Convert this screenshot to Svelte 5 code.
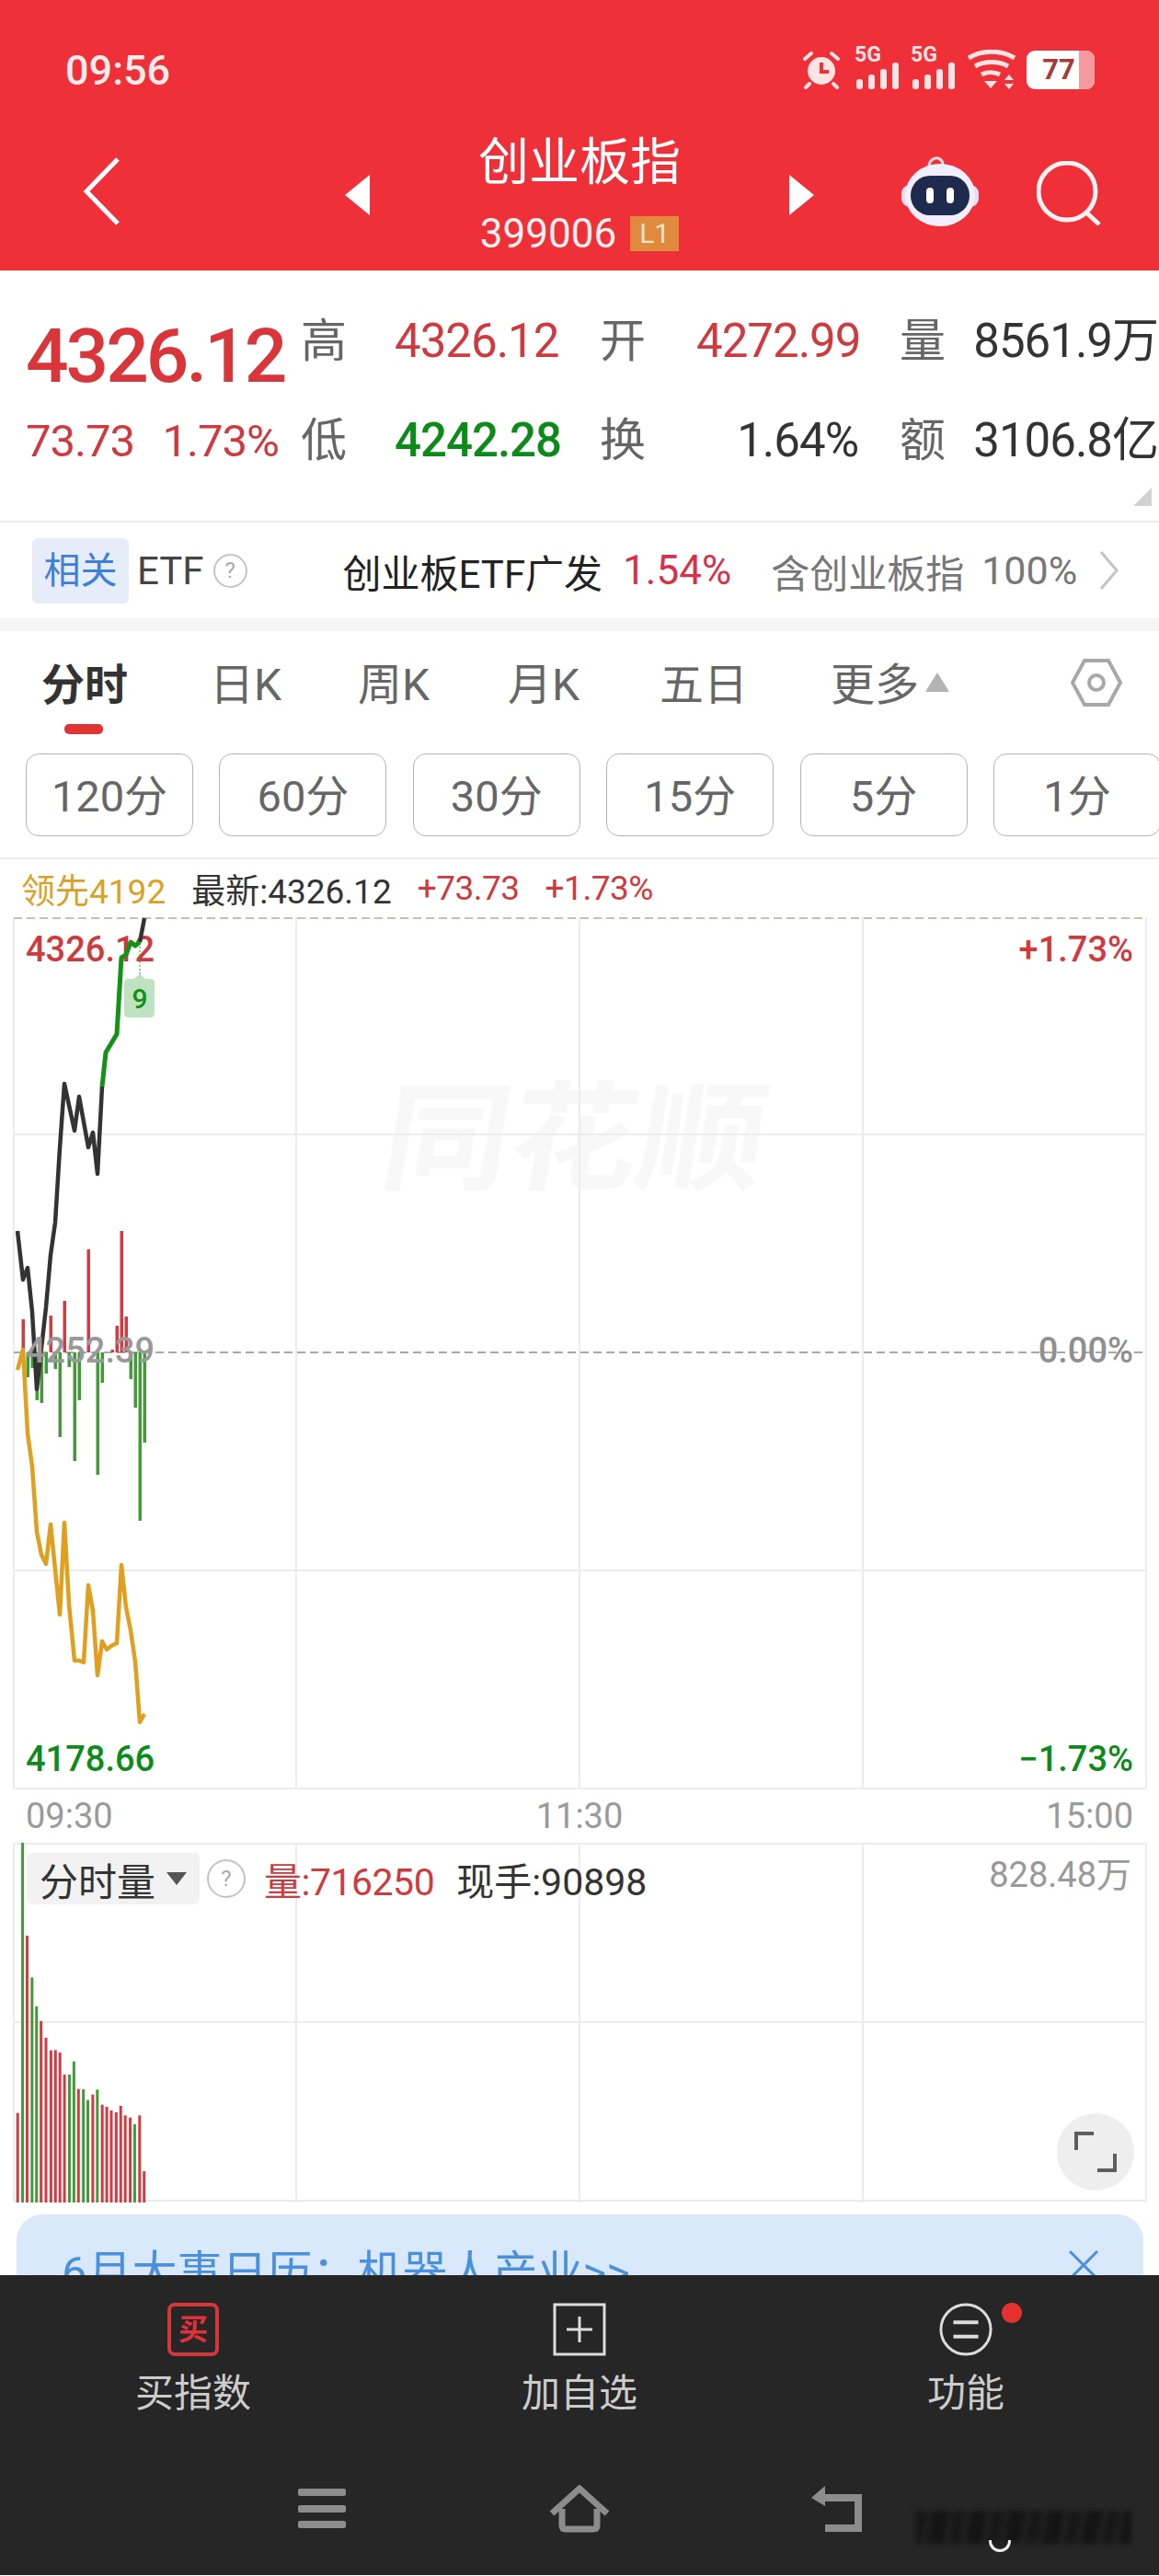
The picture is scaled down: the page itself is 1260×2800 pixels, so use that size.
<script>
	const stats = [
		{ label: '高', value: '4326.12', tone: 'up', pad: false },
		{ label: '开', value: '4272.99', tone: 'up', pad: true },
		{ label: '量', value: '8561.9万', tone: 'ink', pad: true }
	];
	const stats2 = [
		{ label: '低', value: '4242.28', tone: 'down', pad: false },
		{ label: '换', value: '1.64%', tone: 'ink', pad: true },
		{ label: '额', value: '3106.8亿', tone: 'ink', pad: true }
	];
	const tabs = ['分时', '日K', '周K', '月K', '五日'];
	const periods = ['120分', '60分', '30分', '15分', '5分', '1分'];

	const pts = (list) => list.map((p) => p.join(',')).join(' ');

	const blackA = [[19,1337],[25,1390],[30,1377],[35,1425],[40,1509],[50,1420],[55,1363],[60,1328],[65,1247],[70,1177],[81,1228],[86,1191],[96,1246],[101,1230],[106,1275],[111,1180]];
	const greenA = [[111,1180],[115,1143],[127,1123],[132,1040],[137,1037],[142,1023],[147,1027],[152,1023]];
	const blackB = [[152,1023],[157,997]];
	const yellow = [[19,1488],[25,1466],[30,1557],[35,1593],[40,1664],[45,1689],[50,1699],[55,1656],[65,1754],[70,1654],[75,1743],[81,1804],[86,1804],[91,1806],[96,1722],[101,1750],[106,1820],[111,1783],[116,1792],[121,1788],[127,1785],[132,1700],[137,1746],[142,1771],[147,1805],[152,1871],[157,1862]];

	const upBars = [[25,1433],[55,1429],[70,1413],[96,1357],[122,1466],[127,1440],[132,1337],[137,1430]];
	const downBars = [[30,1496],[35,1486],[40,1521],[45,1524],[50,1492],[60,1487],[65,1561],[75,1485],[81,1587],[86,1521],[106,1602],[111,1502],[142,1498],[147,1529],[152,1652],[157,1567]];

	const volume = [[43,1010,'r'],[55,128,'g'],[66,432,'r'],[78,568,'g'],[89,662,'g'],[100,710,'r'],[112,765,'r'],[124,806,'r'],[135,805,'r'],[146,813,'r'],[157,885,'r'],[169,885,'g'],[180,842,'g'],[191,932,'r'],[203,933,'g'],[214,968,'g'],[226,950,'r'],[237,934,'g'],[249,983,'r'],[260,990,'r'],[271,1002,'r'],[283,1008,'r'],[294,987,'r'],[305,1018,'r'],[317,1025,'r'],[328,1047,'g'],[340,1018,'r'],[351,1200,'r']].map(([z, t, c]) => ({ x: z / 2.24, top: 1960 + t / 3, c }));
</script>

<div class="page">
	<header class="head">
		<div class="status">
			<span class="time">09:56</span>
			<div class="sysicons">
				<svg class="alarm" width="42" height="42" viewBox="0 0 42 42" fill="none">
					<circle cx="21" cy="22" r="15" fill="#fde3e4" />
					<path d="M21 13v10h8" stroke="#ee3039" stroke-width="4" />
					<path d="M3 9l7-6M39 9l-7-6M8 36l-4 4M34 36l4 4" stroke="#fde3e4" stroke-width="4" stroke-linecap="round" />
				</svg>
				<div class="signal">
					<span class="g">5G</span>
					<svg width="48" height="30" viewBox="0 0 48 30" fill="#fde3e4">
						<rect x="2" y="18" width="7" height="11" rx="3" /><rect x="15" y="13" width="7" height="16" rx="3" /><rect x="28" y="7" width="7" height="22" rx="3" /><rect x="41" y="0" width="7" height="29" rx="3" />
					</svg>
				</div>
				<div class="signal">
					<span class="g">5G</span>
					<svg width="48" height="30" viewBox="0 0 48 30" fill="#fde3e4">
						<rect x="2" y="18" width="7" height="11" rx="3" /><rect x="15" y="13" width="7" height="16" rx="3" /><rect x="28" y="7" width="7" height="22" rx="3" /><rect x="41" y="0" width="7" height="29" rx="3" />
					</svg>
				</div>
				<svg width="54" height="44" viewBox="0 0 54 44" fill="none" stroke="#fde3e4" stroke-width="5">
					<path d="M2 9c15-9 35-9 50 0" />
					<path d="M9 18c10-6 26-6 36 0" />
					<path d="M16 27c6-3 14-3 20 0" />
					<path d="M19 34h14l-7 8z" fill="#fde3e4" stroke="none" />
					<path d="M46 27l5 6h-10zM46 43l5-6h-10z" fill="#fde3e4" stroke="none" />
				</svg>
				<div class="batt"><span class="lvl">77</span><i></i></div>
			</div>
		</div>
		<div class="nav">
			<svg class="back" width="44" height="78" viewBox="0 0 44 78" fill="none">
				<path d="M40 4L6 39l34 35" stroke="#fff" stroke-width="5" />
			</svg>
			<svg class="lift" width="27" height="44" viewBox="0 0 27 44"><path d="M27 0v44L0 22z" fill="#fff" /></svg>
			<div class="title">
				<div class="name">创业板指</div>
				<div class="code">399006 <span class="lv">L1</span></div>
			</div>
			<svg class="lift" width="27" height="44" viewBox="0 0 27 44"><path d="M0 0v44l27-22z" fill="#fff" /></svg>
			<svg class="lift bot" width="84" height="78" viewBox="0 0 84 78">
				<path d="M30 12c0-8 8-11 12-8s3 6 3 9" fill="none" stroke="#f3dbe4" stroke-width="3" />
				<rect x="0" y="32" width="84" height="24" rx="9" fill="#e5dcf5" />
				<ellipse cx="42" cy="43" rx="38" ry="34" fill="#f2eefb" />
				<rect x="10" y="22" width="64" height="43" rx="21" fill="#1e2b4f" />
				<rect x="27" y="35" width="8" height="17" rx="4" fill="#fff" />
				<rect x="49" y="35" width="8" height="17" rx="4" fill="#fff" />
			</svg>
			<svg class="lift search" width="70" height="70" viewBox="0 0 70 70" fill="none" stroke="#fef1f1" stroke-width="5">
				<circle cx="33" cy="33" r="31" />
				<path d="M53 55l15 14" />
			</svg>
		</div>
	</header>

	<section class="quote">
		<div class="big">4326.12</div>
		{#each stats as s}
			<div class="lab" class:pad={s.pad}>{s.label}</div>
			<div class="val {s.tone}">{s.value}</div>
		{/each}
		<div class="chg"><span>73.73</span><span>1.73%</span></div>
		{#each stats2 as s}
			<div class="lab" class:pad={s.pad}>{s.label}</div>
			<div class="val {s.tone}">{s.value}</div>
		{/each}
		<svg class="corner" width="20" height="20" viewBox="0 0 20 20"><path d="M20 0v20H0z" fill="#d2d2d2" /></svg>
	</section>

	<section class="etf">
		<span class="tag">相关</span>
		<span class="etfname">ETF</span>
		<span class="qm">?</span>
		<span class="fund">创业板ETF广发</span>
		<span class="pct">1.54%</span>
		<span class="hold">含创业板指</span>
		<span class="hold full">100%</span>
		<svg class="more" width="22" height="44" viewBox="0 0 22 44" fill="none"><path d="M2 2l17 20L2 42" stroke="#c4c4c4" stroke-width="3" /></svg>
	</section>
	<div class="strip"></div>

	<nav class="tabs">
		{#each tabs as t, i}
			<div class="tab" class:on={i === 0}>{t}{#if i === 0}<i class="bar"></i>{/if}</div>
		{/each}
		<div class="tab more-tab">更多<svg class="upt" width="26" height="21" viewBox="0 0 26 21"><path d="M13 0l13 21H0z" fill="#b3b3b3" /></svg></div>
		<svg class="hex" width="56" height="54" viewBox="0 0 56 54" fill="none" stroke="#a8a8a8" stroke-width="4">
			<path d="M15 3h26l13 24-13 24H15L2 27z" />
			<circle cx="28" cy="27" r="8" />
		</svg>
	</nav>

	<div class="periods">
		{#each periods as p}
			<div class="period">{p}</div>
		{/each}
	</div>

	<div class="legend">
		<span class="lead">领先4192</span>
		<span class="last">最新:4326.12</span>
		<span class="rise">+73.73</span>
		<span class="rise">+1.73%</span>
	</div>

	<div class="chart">
		<svg width="1260" height="948" viewBox="0 996 1260 948">
			<text class="mark" x="821" y="1282" text-anchor="middle" transform="skewX(-9)" textLength="416" lengthAdjust="spacingAndGlyphs">同花顺</text>
			{#each [15, 322, 630, 938, 1246] as x}
				<line x1={x} x2={x} y1="996" y2="1944" class="grid" />
			{/each}
			{#each [1232, 1706, 1943] as y}
				<line x1="15" x2="1246" y1={y} y2={y} class="grid" />
			{/each}
			<line x1="15" x2="1246" y1="997" y2="997" class="top" />
			<line x1="15" x2="1246" y1="1469" y2="1469" class="mid" />

			{#each upBars as b}
				<rect x={b[0] - 1.5} y={b[1]} width="3.5" height={1469 - b[1]} fill="#cf3c41" />
			{/each}
			{#each downBars as b}
				<rect x={b[0] - 1.5} y="1469" width="3.5" height={b[1] - 1469} fill="#449a3b" />
			{/each}

			<text class="lbl" x="28" y="1044" fill="#cf3a3f">4326.12</text>
			<text class="lbl" x="1232" y="1044" fill="#cf3a3f" text-anchor="end">+1.73%</text>
			<text class="lbl" x="28" y="1924" fill="#0c8a1a">4178.66</text>
			<text class="lbl" x="1232" y="1924" fill="#0c8a1a" text-anchor="end">−1.73%</text>

			<polyline points={pts(yellow)} class="ln" stroke="#e09f1f" />
			<polyline points={pts(blackA)} class="ln" stroke="#333" />
			<polyline points={pts(blackB)} class="ln" stroke="#333" />
			<polyline points={pts(greenA)} class="ln thick" stroke="#149117" />

			<line x1="152" x2="152" y1="1024" y2="1058" stroke="#2f8f3a" stroke-width="1" stroke-dasharray="2 2" />
			<path d="M152 1058l6 5h5q5 0 5 5v32q0 5-5 5h-23q-5 0-5-5v-32q0-5 5-5h5z" fill="#bfe3c0" />
			<text x="152" y="1095" class="nine" text-anchor="middle">9</text>

			<text class="lbl" x="28" y="1480" fill="#999">4252.39</text>
			<text class="lbl" x="1232" y="1480" fill="#8f8f8f" text-anchor="end">0.00%</text>
		</svg>
	</div>

	<div class="axis"><span>09:30</span><span>11:30</span><span>15:00</span></div>

	<div class="vol">
		<svg width="1260" height="391" viewBox="0 2003 1260 391">
			{#each [15, 322, 630, 938, 1246] as x}
				<line x1={x} x2={x} y1="2003" y2="2394" class="grid" />
			{/each}
			{#each [2004, 2198, 2392] as y}
				<line x1="15" x2="1246" y1={y} y2={y} class="grid" />
			{/each}
			{#each volume as v}
				<rect x={v.x - 1.5} y={v.top} width="3" height={2394 - v.top} fill={v.c === 'r' ? '#cf3c41' : '#449a3b'} />
			{/each}
		</svg>
		<div class="volbar">
			<div class="chip">分时量<svg width="22" height="14" viewBox="0 0 22 14"><path d="M0 0h22L11 14z" fill="#555" /></svg></div>
			<span class="qm wide">?</span>
			<span class="rise v">量:716250</span>
			<span class="now">现手:90898</span>
		</div>
		<div class="vmax">828.48万</div>
		<div class="expand">
			<svg width="46" height="46" viewBox="0 0 46 46" fill="none" stroke="#5e5e5e" stroke-width="4">
				<path d="M2 21V3h19M44 25v18H25" />
			</svg>
		</div>
	</div>

	<div class="banner">
		<span class="bt">6月大事日历：机器人产业&gt;&gt;</span>
		<svg width="34" height="34" viewBox="0 0 34 34" fill="none" stroke="#4a90dc" stroke-width="3"><path d="M2 2l30 30M32 2L2 32" /></svg>
	</div>

	<footer class="foot">
		<div class="actions">
			<div class="act">
				<div class="ico buy">买</div>
				<span>买指数</span>
			</div>
			<div class="act">
				<svg class="ico" width="58" height="58" viewBox="0 0 58 58" fill="none" stroke="#ddd" stroke-width="3">
					<rect x="2" y="2" width="54" height="54" />
					<path d="M29 15v28M15 29h28" />
				</svg>
				<span>加自选</span>
			</div>
			<div class="act fn">
				<svg class="ico" width="60" height="60" viewBox="0 0 60 60" fill="none" stroke="#ddd" stroke-width="3">
					<circle cx="30" cy="30" r="28" />
					<path d="M16 22h28M16 38h28" stroke-width="4" />
				</svg>
				<i class="dot"></i>
				<span>功能</span>
			</div>
		</div>
		<div class="sysnav">
			<svg width="54" height="44" viewBox="0 0 54 44" fill="#8c8c8c">
				<rect x="1" y="0" width="52" height="8" rx="2" /><rect x="1" y="18" width="52" height="8" rx="2" /><rect x="1" y="35" width="52" height="8" rx="2" />
			</svg>
			<svg width="68" height="52" viewBox="0 0 68 52" fill="none" stroke="#8c8c8c" stroke-width="7">
				<path d="M4 31L34 4l30 27" />
				<path d="M15 26v18q0 4 4 4h30q4 0 4-4V26" />
			</svg>
			<svg width="58" height="52" viewBox="0 0 58 52" fill="none">
				<path d="M14 14h38v33H16" stroke="#8c8c8c" stroke-width="8" />
				<path d="M1 14L16 1v22z" fill="#8c8c8c" />
			</svg>
		</div>
		<div class="smudge"></div>
		<i class="g"></i>
	</footer>
</div>

<style>
	:global(body) {
		margin: 0;
		background: #fff;
	}
	.page {
		width: 1260px;
		height: 2800px;
		overflow: hidden;
		font-family: Roboto, 'Noto Sans CJK SC', sans-serif;
		color: #333;
		background: #fff;
	}
	.head {
		height: 294px;
		background: #ef3038;
		color: #fff;
		box-sizing: border-box;
		padding-top: 51px;
	}
	.status {
		display: flex;
		justify-content: space-between;
		align-items: center;
		height: 50px;
		padding: 0 70px 0 71px;
	}
	.time {
		font-size: 45px;
		font-weight: 500;
		color: #fdeaea;
	}
	.sysicons {
		display: flex;
		align-items: center;
		gap: 11px;
	}
	.alarm {
		margin-right: 4px;
	}
	.signal {
		position: relative;
		width: 50px;
		height: 44px;
		display: flex;
		align-items: flex-end;
	}
	.signal .g {
		position: absolute;
		left: 0;
		top: -6px;
		font-size: 23px;
		line-height: 24px;
		font-weight: 700;
		color: #fde3e4;
	}
	.batt {
		position: relative;
		width: 74px;
		height: 42px;
		box-sizing: border-box;
		background: #fff;
		border-radius: 9px;
		text-align: center;
		overflow: hidden;
	}
	.batt i {
		position: absolute;
		right: 0;
		top: 0;
		width: 17px;
		height: 42px;
		background: #f79aa0;
	}
	.lvl {
		display: block;
		padding-right: 4px;
		font-size: 31px;
		line-height: 42px;
		font-weight: 700;
		color: #a93a3a;
	}
	.nav {
		display: grid;
		grid-template-columns: 375px 27px 456px 27px 95px 84px 63px 70px;
		margin-top: 40px;
		align-items: center;
	}
	.back {
		margin-left: 88px;
		margin-bottom: 14px;
	}
	.lift {
		margin-bottom: 6px;
	}
	.bot {
		grid-column: 6;
		margin-bottom: 14px;
	}
	.search {
		grid-column: 8;
		margin-bottom: 10px;
	}
	.name {
		font-size: 55px;
		line-height: 70px;
		color: #fff;
	}
	.title {
		text-align: center;
	}
	.code {
		margin-top: 8px;
		height: 70px;
		display: flex;
		justify-content: center;
		align-items: center;
		gap: 15px;
		font-size: 44px;
		color: #fdf0f0;
	}
	.lv {
		width: 53px;
		height: 38px;
		background: #e08a3e;
		color: #fbe3c9;
		font-size: 30px;
		line-height: 38px;
		text-align: center;
	}
	.quote {
		position: relative;
		height: 274px;
		box-sizing: border-box;
		padding: 23px 0 0 28px;
		display: grid;
		grid-template-columns: 299px 102px 178px 150px 176px 124px 202px;
		grid-template-rows: 108px 108px;
		align-items: center;
		border-bottom: 2px solid #ececec;
	}
	.big {
		font-size: 82px;
		font-weight: 500;
		color: #d8363a;
		letter-spacing: -3px;
		padding-top: 32px;
		line-height: 76px;
		white-space: nowrap;
	}
	.lab {
		font-size: 50px;
		line-height: 60px;
		color: #666;
	}
	.lab.pad {
		padding-left: 45px;
	}
	.val {
		font-size: 51px;
		line-height: 60px;
		letter-spacing: -1px;
		text-align: right;
		white-space: nowrap;
	}
	.up {
		color: #cf3a3f;
	}
	.down {
		color: #0c8a1a;
		font-weight: 500;
	}
	.ink {
		color: #333;
	}
	.chg {
		display: flex;
		justify-content: space-between;
		padding-right: 24px;
		font-size: 49px;
		letter-spacing: -1px;
		color: #cf3a3f;
	}
	.corner {
		position: absolute;
		right: 8px;
		bottom: 16px;
	}
	.etf {
		height: 104px;
		display: flex;
		align-items: center;
		padding-left: 35px;
		box-sizing: border-box;
	}
	.tag {
		width: 105px;
		height: 71px;
		background: #e6edf9;
		border-radius: 6px;
		color: #3e7fdb;
		font-size: 40px;
		line-height: 71px;
		text-align: center;
	}
	.etfname {
		margin-left: 9px;
		font-size: 42px;
		color: #444;
	}
	.qm {
		width: 33px;
		height: 33px;
		margin-left: 10px;
		border: 2px solid #c4c4c4;
		border-radius: 50%;
		color: #aaa;
		font-size: 24px;
		line-height: 33px;
		text-align: center;
		flex: none;
	}
	.fund {
		margin-left: 104px;
		font-size: 42px;
		color: #222;
		white-space: nowrap;
	}
	.pct {
		margin-left: 22px;
		font-size: 44px;
		color: #d9304a;
	}
	.hold {
		margin-left: 43px;
		font-size: 42px;
		color: #777;
		white-space: nowrap;
	}
	.full {
		margin-left: 19px;
		font-size: 43px;
	}
	.more {
		margin-left: 24px;
	}
	.strip {
		height: 14px;
		background: #f5f5f5;
	}
	.tabs {
		position: relative;
		display: grid;
		grid-template-columns: 183px 161px 163px 165px 186px 261px auto;
		height: 133px;
		box-sizing: border-box;
		padding: 36px 0 0 45px;
	}
	.tab {
		position: relative;
		font-size: 48px;
		line-height: 46px;
		color: #666;
		white-space: nowrap;
	}
	.tab.on {
		font-weight: 700;
		font-size: 47px;
		color: #333;
	}
	.more-tab {
		display: flex;
		align-items: flex-start;
	}
	.bar {
		position: absolute;
		left: 25px;
		top: 65px;
		width: 42px;
		height: 11px;
		border-radius: 5px;
		background: #e23333;
	}
	.upt {
		margin-left: 7px;
		margin-top: 9px;
	}
	.hex {
		margin-top: -7px;
	}
	.periods {
		display: flex;
		gap: 28.4px;
		padding-left: 28px;
		height: 90px;
		overflow: hidden;
	}
	.period {
		flex: none;
		width: 182px;
		box-sizing: border-box;
		border: 1.5px solid #b4b4b4;
		border-radius: 14px;
		font-size: 47px;
		line-height: 92px;
		text-align: center;
		color: #666;
	}
	.legend {
		margin-top: 23px;
		height: 65px;
		box-sizing: border-box;
		border-top: 2px solid #ececec;
		display: flex;
		align-items: center;
		padding-left: 23px;
		font-size: 37px;
		gap: 28px;
		white-space: nowrap;
	}
	.lead {
		color: #d9a227;
	}
	.last {
		color: #333;
	}
	.rise {
		color: #cf3a3f;
		letter-spacing: -0.5px;
	}
	.chart {
		height: 948px;
	}
	svg {
		display: block;
	}
	.mark {
		font-size: 128px;
		font-weight: 700;
		fill: #f8f8f8;
	}
	.grid {
		stroke: #ececec;
		stroke-width: 2;
	}
	.top {
		stroke: #cdbfa5;
		stroke-width: 2;
		stroke-dasharray: 9 5;
	}
	.mid {
		stroke: #a8a8a8;
		stroke-width: 2;
		stroke-dasharray: 9 5;
	}
	.lbl {
		font-size: 38px;
		font-weight: 500;
	}
	.ln {
		fill: none;
		stroke-width: 4.5;
		stroke-linejoin: round;
	}
	.thick {
		stroke-width: 5;
	}
	.nine {
		font-size: 30px;
		font-weight: 500;
		fill: #129018;
	}
	.axis {
		height: 58px;
		display: grid;
		grid-template-columns: 1fr 1fr 1fr;
		align-items: center;
		padding: 0 28px 0 28px;
		font-size: 38px;
		color: #9a9a9a;
	}
	.axis span:nth-child(2) {
		text-align: center;
	}
	.axis span:nth-child(3) {
		text-align: right;
	}
	.vol {
		position: relative;
		height: 391px;
	}
	.volbar {
		position: absolute;
		left: 29px;
		top: 11px;
		display: flex;
		align-items: center;
		height: 56px;
	}
	.chip {
		display: flex;
		align-items: center;
		gap: 12px;
		width: 188px;
		height: 56px;
		box-sizing: border-box;
		padding-left: 14px;
		background: #f2f2f2;
		border-radius: 6px;
		font-size: 42px;
		color: #333;
		white-space: nowrap;
	}
	.qm.wide {
		width: 38px;
		height: 38px;
		line-height: 38px;
		margin-left: 8px;
	}
	.v {
		margin-left: 20px;
		font-size: 41px;
	}
	.now {
		margin-left: 24px;
		font-size: 41px;
		color: #333;
	}
	.vmax {
		position: absolute;
		right: 30px;
		top: 8px;
		font-size: 38px;
		line-height: 54px;
		color: #999;
	}
	.expand {
		position: absolute;
		left: 1149px;
		top: 294px;
		width: 84px;
		height: 84px;
		border-radius: 50%;
		background: #eee;
		display: flex;
		align-items: center;
		justify-content: center;
	}
	.banner {
		margin: 13px 17px 0 18px;
		height: 66px;
		overflow: hidden;
		background: #d9e8fa;
		border-radius: 28px 28px 0 0;
		display: flex;
		justify-content: space-between;
		padding: 38px 48px 0 49px;
		box-sizing: border-box;
		color: #4a90dc;
		font-size: 49px;
	}
	.bt {
		line-height: 60px;
		margin-top: -4px;
		white-space: nowrap;
	}
	.foot {
		position: relative;
		height: 326px;
		background: #262626;
		color: #ccc;
		overflow: hidden;
	}
	.actions {
		display: grid;
		grid-template-columns: 420px 420px 420px;
		padding-top: 30px;
	}
	.act {
		position: relative;
		display: flex;
		flex-direction: column;
		align-items: center;
		font-size: 42px;
		line-height: 48px;
	}
	.ico {
		height: 58px;
		margin-bottom: 17px;
	}
	.buy {
		width: 56px;
		box-sizing: border-box;
		border: 4px solid #d6353a;
		border-radius: 8px;
		color: #e0303a;
		font-size: 32px;
		font-weight: 700;
		line-height: 50px;
		text-align: center;
	}
	.fn .dot {
		position: absolute;
		left: 249px;
		top: 0;
		width: 22px;
		height: 22px;
		background: #e53030;
		border-radius: 50%;
	}
	.sysnav {
		display: grid;
		grid-template-columns: 280px 280px 280px;
		justify-items: center;
		align-items: center;
		padding: 75px 210px 0;
	}
	.smudge {
		position: absolute;
		left: 995px;
		top: 256px;
		width: 235px;
		height: 36px;
		background: repeating-linear-gradient(100deg, #171717 0 14px, #222 14px 19px, #141414 19px 37px, #252525 37px 41px);
		filter: blur(3px);
	}
	.foot > .g {
		position: absolute;
		left: 1075px;
		top: 288px;
		width: 18px;
		height: 10px;
		border: 3px solid #eee;
		border-top: 0;
		border-radius: 0 0 12px 12px;
	}
</style>
